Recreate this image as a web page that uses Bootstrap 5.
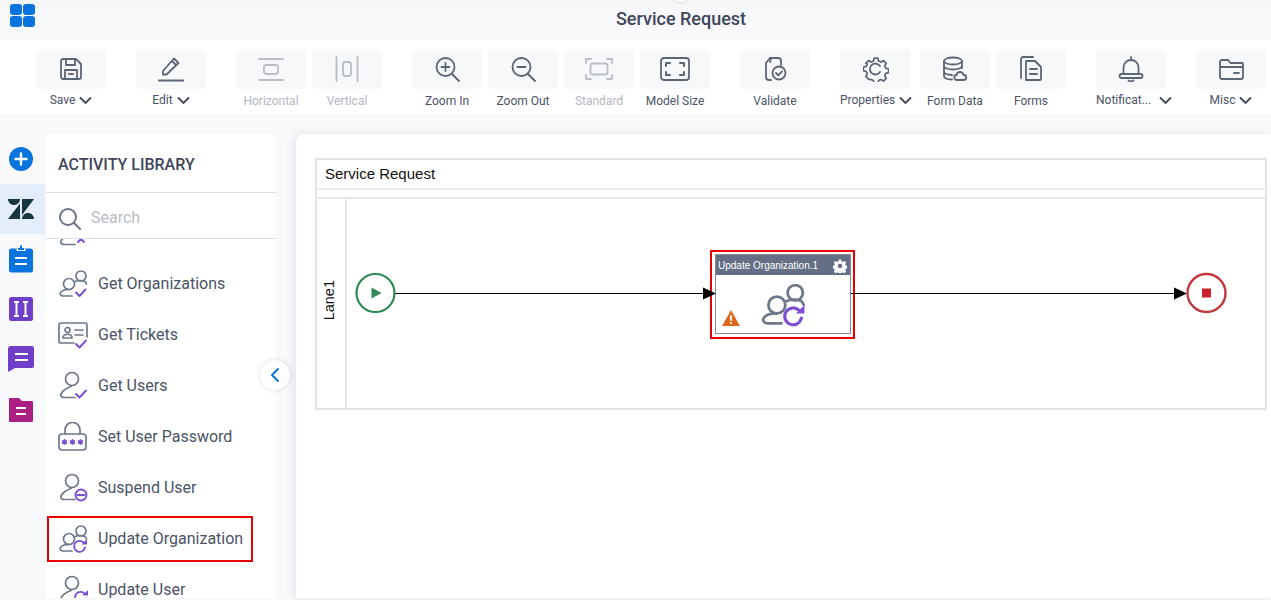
<!DOCTYPE html>
<html lang="en">

<head>
  <meta charset="UTF-8">
  <title>Service Request</title>
  <link href="https://cdn.jsdelivr.net/npm/bootstrap@5.3.0/dist/css/bootstrap.min.css" rel="stylesheet">
  <style>
    body { background: #f8f9fb; font-family: Roboto, sans-serif; color: #434a5e; height: 600px; overflow: hidden; }
    .top-head { height: 39px; background: linear-gradient(#f4f5f7, #f8f9fb 30%); }
    .top-logo { left: 10px; top: 4px; width: 25px; display: grid; grid-template-columns: 12px 12px; gap: 1px; }
    .top-logo i { height: 11px; background: #0a74de; border-radius: 3px; display: block; }
    .top-knob { left: 674px; top: -6px; width: 13px; height: 8px; background: #fff; border-radius: 50%; box-shadow: 0 0 3px rgba(80, 90, 110, .25); }
    .top-title { font-size: 18px; font-weight: 500; color: #3f4659; margin-left: 91px; line-height: 37px; }
    .tool-strip { height: 75px; background: #fff; padding: 10px 0 0 36px; }
    .tool-item { width: 70px; margin-right: 6px; flex: none; }
    .tool-item.grp-end { margin-right: 30px; }
    .tool-item.wide-item { width: 71px; margin-right: 9px; }
    .tool-item:last-child { margin-right: 0; }
    .tool-box { height: 40px; background: #f7f8fa; border-radius: 5px; }
    .tool-box svg { width: 26px; height: 26px; fill: none; stroke: #5c6575; stroke-width: 1.8; stroke-linecap: round; stroke-linejoin: round; }
    .tool-box svg.art-28 { width: 28px; }
    .tool-box svg.art-30 { width: 30px; }
    .tool-label { font-size: 12px; line-height: 14px; margin-top: 5px; white-space: nowrap; color: #4b5366; }
    .tool-label.has-menu { margin-top: 4px; }
    .tool-label svg { width: 13px; height: 9px; margin-left: 4px; fill: none; stroke: #3f4659; stroke-width: 1.8; }
    .is-off .tool-box svg { stroke: #b9bdc6; }
    .is-off .tool-label { color: #b4b8c1; }
    .work-row { height: 484px; padding-top: 20px; }
    .side-rail { width: 46px; flex: none; }
    .rail-slot { height: 50px; width: 45px; padding-right: 3px; }
    .rail-slot.on-slot { background: #e3eefa; }
    .rail-slot svg { width: 28px; height: 28px; }
    .lib-panel { width: 230px; flex: none; background: #fff; }
    .lib-head { height: 59px; padding: 3px 0 0 12px; font-size: 16px; font-weight: 500; color: #3f4659; border-bottom: 1px solid #dcdde6; }
    .lib-search { height: 46px; padding: 5px 0 0 12px; border-bottom: 1px solid #dcdde6; background: #fff; position: relative; z-index: 1; font-size: 16px; color: #b9bcc5; }
    .lib-search svg { width: 23px; height: 23px; margin-right: 10px; fill: none; stroke: #6c7585; stroke-width: 2; stroke-linecap: round; }
    .lib-list { margin-top: -32px; }
    .lib-item { height: 51px; padding-left: 12px; font-size: 16px; color: #4b5366; }
    .lib-item svg { width: 30px; height: 30px; margin-right: 10px; flex: none; fill: none; stroke: #6f7889; stroke-width: 1.7; stroke-linecap: round; stroke-linejoin: round; }
    .lib-item svg .acc { stroke: #7a4fd6; stroke-width: 1.9; }
    .lib-item svg .acc-fill { fill: #7a4fd6; stroke: none; }
    .pick-box { left: 1px; top: 3px; width: 206px; height: 46px; border: 2px solid #e90000; }
    .fold-btn { left: 260px; top: 246px; width: 30px; height: 30px; background: #fff; box-shadow: 0 0 5px rgba(60, 70, 90, .2); z-index: 2; }
    .fold-btn svg { width: 12px; height: 16px; fill: none; stroke: #0a74de; stroke-width: 2; stroke-linecap: round; stroke-linejoin: round; }
    .canvas-card { margin-left: 20px; background: #fff; padding: 24px 4px 0 19px; border-top-left-radius: 8px; box-shadow: -2px 0 8px rgba(80, 90, 110, .14); }
    .pool-box { height: 252px; border: 2px solid #e3e3e3; font-family: "Liberation Sans", Arial, sans-serif; font-size: 15px; color: #111; }
    .pool-title { height: 30px; padding-left: 8px; line-height: 27px; border-bottom: 2px solid #ececec; }
    .pool-gap { height: 9px; border-bottom: 2px solid #e6e6e6; }
    .lane-row { height: 209px; }
    .lane-tag { width: 30px; border-right: 2px solid #e6e6e6; }
    .lane-tag span { writing-mode: vertical-rl; transform: rotate(180deg); font-size: 14.5px; margin-bottom: 6px; margin-right: 2px; }
    .flow-lines { left: 0; top: 0; width: 950px; height: 209px; }
    .task-pick { left: 393px; top: 51px; width: 145px; height: 89px; border: 2px solid #e90000; background: #fff; padding: 2px 2px 0 3px; }
    .task-box { height: 80px; border: 1px solid #8c8c8c; }
    .task-top { height: 20px; background: #646f85; color: #fff; font-size: 10px; padding: 1px 3px 0 2px; white-space: nowrap; }
    .task-top svg { width: 14px; height: 14px; }
    .task-warn { left: 6px; bottom: 7px; width: 18px; height: 16px; }
    .task-art { left: 44px; top: 27px; width: 46px; height: 46px; fill: none; stroke: #6f7889; stroke-width: 1.8; stroke-linecap: round; stroke-linejoin: round; }
    .task-art .acc { stroke: #7a4fd6; stroke-width: 2; }
    .task-art .acc-fill { fill: #7a4fd6; stroke: none; }
  </style>
</head>

<body>
  <svg width="0" height="0" class="position-absolute">
    <symbol id="twoPeople" viewBox="0 0 30 30">
      <circle cx="11" cy="15" r="5.500"/>
      <circle cx="23" cy="7" r="5"/>
      <path d="M14 27H5c-2.500 0-3.500-2-2.500-3.500C4 21 7 20.500 11 20.500"/>
      <path d="M17 12.500c1.500-.7 3.500-1 6-1 3 0 5 1.500 5.500 3.500"/>
    </symbol>
    <symbol id="onePerson" viewBox="0 0 30 30">
      <circle cx="14" cy="8" r="6.500"/>
      <path d="M17 26.500H6c-3 0-4-2.500-2.500-4.500 2-3 5.500-5 9.500-6.500"/>
    </symbol>
  </svg>

  <div class="top-head position-relative d-flex justify-content-center">
    <div class="top-logo position-absolute"><i></i><i></i><i></i><i></i></div>
    <span class="top-knob position-absolute"></span>
    <div class="top-title">Service Request</div>
  </div>

  <div class="tool-strip d-flex">
    <div class="tool-item grp-end text-center">
      <div class="tool-box d-flex align-items-center justify-content-center"><svg viewBox="0 0 26 26"><path d="M5 3h13l5 5v13a2 2 0 0 1-2 2H5a2 2 0 0 1-2-2V5a2 2 0 0 1 2-2z"/><path d="M8 3v6h9V3M7 23v-9h12v9M11 18h4"/></svg></div>
      <div class="tool-label has-menu">Save<svg viewBox="0 0 13 9"><path d="M1 1.500l5.500 5.500 5.500-5.500"/></svg></div>
    </div>
    <div class="tool-item grp-end text-center">
      <div class="tool-box d-flex align-items-center justify-content-center"><svg viewBox="0 0 26 26"><path d="M5 18v-3L16 2.500l4.500 4.500L8.500 18.500H5zM14 5l4 4"/><path d="M1 24.500h24" stroke-width="2.200"/></svg></div>
      <div class="tool-label has-menu">Edit<svg viewBox="0 0 13 9"><path d="M1 1.500l5.500 5.500 5.500-5.500"/></svg></div>
    </div>
    <div class="tool-item is-off text-center">
      <div class="tool-box d-flex align-items-center justify-content-center"><svg viewBox="0 0 26 26"><path d="M1 3h24M1 24h24"/><rect x="6" y="9" width="14" height="9" rx="2.500"/></svg></div>
      <div class="tool-label">Horizontal</div>
    </div>
    <div class="tool-item grp-end is-off text-center">
      <div class="tool-box d-flex align-items-center justify-content-center"><svg viewBox="0 0 26 26"><path d="M2.500 1v24M23.500 1v24"/><rect x="9" y="6" width="8" height="14" rx="2.500"/></svg></div>
      <div class="tool-label">Vertical</div>
    </div>
    <div class="tool-item text-center">
      <div class="tool-box d-flex align-items-center justify-content-center"><svg class="art-28" viewBox="0 0 26 26"><circle cx="11.500" cy="11" r="9"/><path d="M18 18l7 7M11.500 7v8M7.500 11h8"/></svg></div>
      <div class="tool-label">Zoom In</div>
    </div>
    <div class="tool-item text-center">
      <div class="tool-box d-flex align-items-center justify-content-center"><svg class="art-28" viewBox="0 0 26 26"><circle cx="11.500" cy="11" r="9"/><path d="M18 18l7 7M7.500 11h8"/></svg></div>
      <div class="tool-label">Zoom Out</div>
    </div>
    <div class="tool-item is-off text-center">
      <div class="tool-box d-flex align-items-center justify-content-center"><svg class="art-28" viewBox="0 0 28 26"><path d="M1 7V3h5M22 3h5v4M27 19v4h-5M6 23H1v-4"/><rect x="5.500" y="7.500" width="17" height="11" rx="2.500"/></svg></div>
      <div class="tool-label">Standard</div>
    </div>
    <div class="tool-item grp-end text-center">
      <div class="tool-box d-flex align-items-center justify-content-center"><svg class="art-30" viewBox="0 0 30 26"><rect x="1" y="2" width="28" height="22" rx="3"/><path d="M6 10V7h4M20 7h4v3M24 16v3h-4M10 19H6v-3" stroke-width="2"/></svg></div>
      <div class="tool-label">Model Size</div>
    </div>
    <div class="tool-item grp-end text-center">
      <div class="tool-box d-flex align-items-center justify-content-center"><svg viewBox="0 0 26 26"><path d="M9 24H7a3 3 0 0 1-3-3V7l4-5h8a3 3 0 0 1 3 3v4"/><path d="M8 2c1 1 .5 3 0 4"/><circle cx="17" cy="17" r="6.500"/><path d="M14 17l2.300 2.300 3.800-4"/></svg></div>
      <div class="tool-label">Validate</div>
    </div>
    <div class="tool-item wide-item text-center">
      <div class="tool-box d-flex align-items-center justify-content-center"><svg viewBox="0 0 26 26"><path d="M11 1.500h4l.7 3 2.600 1.100 2.700-1.600 2.900 2.900-1.600 2.700 1.100 2.600 3 .7v4l-3 .7-1.100 2.600 1.600 2.700-2.900 2.900-2.700-1.600-2.600 1.100-.7 3h-4l-.7-3-2.600-1.100L5 23.800l-2.900-2.900 1.600-2.700-1.100-2.600-3-.7v-4l3-.7 1.100-2.600L2.100 6.900 5 4l2.700 1.600 2.600-1.100z" transform="translate(.8 .8) scale(.94)"/><path d="M17 10a5.500 5.500 0 1 0 0 6"/></svg></div>
      <div class="tool-label has-menu">Properties<svg viewBox="0 0 13 9"><path d="M1 1.500l5.500 5.500 5.500-5.500"/></svg></div>
    </div>
    <div class="tool-item text-center">
      <div class="tool-box d-flex align-items-center justify-content-center"><svg viewBox="0 0 26 26"><ellipse cx="11" cy="5" rx="9" ry="3.500"/><path d="M2 5v15c0 2 3 3.500 8 3.500M20 5v7M2 10c0 2 4 3.500 9 3.500s9-1.500 9-3.500M2 15.500c0 2 3 3.300 8 3.500"/><path d="M15 24a2.500 2.500 0 0 1-.5-5c.5-2 2-3 3.500-3s3 1 3.500 3a2.500 2.500 0 0 1 .5 5z"/></svg></div>
      <div class="tool-label">Form Data</div>
    </div>
    <div class="tool-item grp-end text-center">
      <div class="tool-box d-flex align-items-center justify-content-center"><svg viewBox="0 0 26 26"><path d="M3 22V3a2 2 0 0 1 2-2h10"/><path d="M8 5h9l6 6v12a1 1 0 0 1-1 1H8z"/><path d="M12 13h7M12 18h7"/></svg></div>
      <div class="tool-label">Forms</div>
    </div>
    <div class="tool-item grp-end text-center">
      <div class="tool-box d-flex align-items-center justify-content-center"><svg viewBox="0 0 26 26"><path d="M13 1v3M5.500 18v-6.500a7.500 7.500 0 0 1 15 0V18"/><rect x="1.500" y="18" width="23" height="4" rx="2"/><path d="M10.500 24.500c1.500 1 3.500 1 5 0"/></svg></div>
      <div class="tool-label has-menu">Notificat...<svg class="ms-2" viewBox="0 0 13 9"><path d="M1 1.500l5.500 5.500 5.500-5.500"/></svg></div>
    </div>
    <div class="tool-item text-center">
      <div class="tool-box d-flex align-items-center justify-content-center"><svg viewBox="0 0 26 26"><path d="M2 21V6a2 2 0 0 1 2-2h6l2.500 3H24a1 1 0 0 1 1 1v13a2 2 0 0 1-2 2H4a2 2 0 0 1-2-2zM2 11h23M16 17h5"/></svg></div>
      <div class="tool-label has-menu">Misc<svg viewBox="0 0 13 9"><path d="M1 1.500l5.500 5.500 5.500-5.500"/></svg></div>
    </div>
  </div>

  <div class="work-row d-flex position-relative">
    <div class="side-rail">
      <div class="rail-slot d-flex align-items-center justify-content-center">
        <svg viewBox="0 0 28 28"><circle cx="14" cy="14" r="12" fill="#0a74de"/><path d="M14 8.500v11M8.500 14h11" stroke="#fff" stroke-width="2.400" stroke-linecap="round"/></svg>
      </div>
      <div class="rail-slot on-slot d-flex align-items-center justify-content-center">
        <svg viewBox="0 0 28 28"><path fill="#17363d" d="M1 4h12c0 3.300-2.700 6-6 6S1 7.300 1 4zM15 4h12L15 20zM13 8.500V24H1zM15 24c0-3.300 2.700-6 6-6s6 2.700 6 6z"/></svg>
      </div>
      <div class="rail-slot d-flex align-items-center justify-content-center">
        <svg viewBox="0 0 28 28"><rect x="2" y="3.500" width="24" height="24" rx="2.500" fill="#0a74de"/><path d="M9.500 3.500h9V6h-9z" fill="#fff"/><path d="M11 3h6v2h-6zM13 .5h2v3h-2z" fill="#0a74de"/><path d="M8 13h12M8 19h12" stroke="#fff" stroke-width="2.200"/></svg>
      </div>
      <div class="rail-slot d-flex align-items-center justify-content-center">
        <svg viewBox="0 0 28 28"><rect x="2" y="2" width="24" height="24" rx="2.500" fill="#6f3fc9"/><path d="M7 7h5M9.500 7v14M7 21h5M16 7h5M18.500 7v14M16 21h5" stroke="#fff" stroke-width="2"/></svg>
      </div>
      <div class="rail-slot d-flex align-items-center justify-content-center">
        <svg viewBox="0 0 28 28"><path d="M4 1h21a2 2 0 0 1 2 2v18a2 2 0 0 1-2 2H8l-7 4V4a3 3 0 0 1 3-3z" fill="#6f3fc9"/><path d="M8 9h13M8 15h13" stroke="#fff" stroke-width="2.200"/></svg>
      </div>
      <div class="rail-slot d-flex align-items-center justify-content-center">
        <svg viewBox="0 0 28 28"><path d="M2 4a1 1 0 0 1 1-1h9l3 3h10a1 1 0 0 1 1 1v19a1 1 0 0 1-1 1H3a1 1 0 0 1-1-1z" fill="#ab1f83"/><path d="M9 13h10M9 19h10" stroke="#fff" stroke-width="2.200"/></svg>
      </div>
    </div>

    <div class="lib-panel overflow-hidden">
      <div class="lib-head d-flex align-items-center">ACTIVITY LIBRARY</div>
      <div class="lib-search d-flex align-items-center">
        <svg viewBox="0 0 23 23"><circle cx="10" cy="10" r="8"/><path d="M16 16l6 6"/></svg>
        <span>Search</span>
      </div>
      <div class="lib-list">
        <div class="lib-item d-flex align-items-center">
          <svg viewBox="0 0 30 30"><use href="#onePerson"/><path class="acc" d="M20 24l3-3 3 3"/></svg>
        </div>
        <div class="lib-item d-flex align-items-center">
          <svg viewBox="0 0 30 30"><use href="#twoPeople"/><path class="acc" d="M18 23.500l3.500 3.500 6-6.500"/></svg>
          <span>Get Organizations</span>
        </div>
        <div class="lib-item d-flex align-items-center">
          <svg viewBox="0 0 30 30"><path d="M16 23H3a2 2 0 0 1-2-2V5a2 2 0 0 1 2-2h24a2 2 0 0 1 2 2v12"/><circle cx="9.500" cy="10" r="2.500"/><path d="M5 18c0-5 9-5 9 0zM17 10h8M17 15h8"/><path class="acc" d="M18 24l3.500 3.500 6.500-7"/></svg>
          <span>Get Tickets</span>
        </div>
        <div class="lib-item d-flex align-items-center">
          <svg viewBox="0 0 30 30"><use href="#onePerson"/><path class="acc" d="M18 23l3.500 3.500 6.500-7"/></svg>
          <span>Get Users</span>
        </div>
        <div class="lib-item d-flex align-items-center">
          <svg viewBox="0 0 30 30"><rect x="1" y="12" width="27" height="16" rx="3"/><path d="M7 12V8a7.500 7.500 0 0 1 15 0v4"/><path class="acc" d="M6.500 18v4M4.700 19l3.600 2M8.300 19l-3.600 2M14.500 18v4M12.700 19l3.600 2M16.300 19l-3.600 2M22.500 18v4M20.700 19l3.600 2M24.300 19l-3.600 2" stroke-width="1.200"/></svg>
          <span>Set User Password</span>
        </div>
        <div class="lib-item d-flex align-items-center">
          <svg viewBox="0 0 30 30"><use href="#onePerson"/><circle class="acc" cx="23" cy="22" r="5.500"/><path class="acc" d="M19.500 22h7"/></svg>
          <span>Suspend User</span>
        </div>
        <div class="lib-item position-relative d-flex align-items-center">
          <span class="pick-box position-absolute"></span>
          <svg viewBox="0 0 30 30"><use href="#twoPeople"/><path class="acc" d="M27 23.500a5.500 5.500 0 1 1-1.500-5"/><path class="acc-fill" d="M23.500 20.500h5.500v-5.500z"/></svg>
          <span>Update Organization</span>
        </div>
        <div class="lib-item d-flex align-items-center">
          <svg viewBox="0 0 30 30"><use href="#onePerson"/><path class="acc" d="M28 23.500a5.500 5.500 0 1 1-1.500-5"/><path class="acc-fill" d="M24.500 20.500h5.500v-5.500z"/></svg>
          <span>Update User</span>
        </div>
      </div>
    </div>

    <div class="fold-btn position-absolute rounded-circle d-flex align-items-center justify-content-center">
      <svg viewBox="0 0 12 16"><path d="M9 2L3 8l6 6"/></svg>
    </div>

    <div class="canvas-card flex-grow-1">
      <div class="pool-box">
        <div class="pool-title">Service Request</div>
        <div class="pool-gap"></div>
        <div class="lane-row d-flex position-relative">
          <div class="lane-tag d-flex align-items-center justify-content-center flex-shrink-0"><span>Lane1</span></div>

          <!-- nodes sit on the lane as a free canvas -->
          <div class="task-pick position-absolute">
            <div class="task-box position-relative">
              <div class="task-top d-flex align-items-center justify-content-between">
                <span>Update Organization.1</span>
                <svg viewBox="0 0 24 24"><path fill="#fff" fill-rule="evenodd" d="M10 1h4l.6 3 2.500 1 2.600-1.700 2.900 2.900-1.700 2.600 1 2.500 3 .6v4l-3 .6-1 2.500 1.700 2.600-2.900 2.900-2.600-1.700-2.500 1-.6 3h-4l-.6-3-2.500-1-2.600 1.700-2.900-2.900 1.700-2.600-1-2.500-3-.6v-4l3-.6 1-2.500L1.400 6.200l2.900-2.900 2.600 1.700 2.500-1zM12 8a4 4 0 1 0 0 8 4 4 0 0 0 0-8z"/></svg>
              </div>
              <svg class="task-warn position-absolute" viewBox="0 0 19 17"><path d="M9.500 0L19 17H0z" fill="#e0681c"/><path d="M9.500 5.500v6M9.500 13v2" stroke="#fff" stroke-width="2"/></svg>
              <svg class="task-art position-absolute" viewBox="0 0 30 30"><use href="#twoPeople"/><path class="acc" d="M27 23.500a5.500 5.500 0 1 1-1.500-5"/><path class="acc-fill" d="M23.500 20.500h5.500v-5.500z"/></svg>
            </div>
          </div>
          <svg class="flow-lines position-absolute" viewBox="0 0 950 209">
            <line x1="78" y1="94.500" x2="390" y2="94.500" stroke="#000" stroke-width="1"/>
            <path d="M386 88.500l13 6-13 6z" fill="#000"/>
            <line x1="534" y1="94.500" x2="860" y2="94.500" stroke="#000" stroke-width="1"/>
            <path d="M857 88.500l13 6-13 6z" fill="#000"/>
            <circle cx="58.500" cy="94" r="19" fill="#fff" stroke="#2e8b57" stroke-width="2.200"/>
            <path d="M54.500 88.500l10 5.500-10 5.500z" fill="#2e8b57"/>
            <circle cx="889.500" cy="94" r="19" fill="#fff" stroke="#c0393f" stroke-width="2.400"/>
            <rect x="885" y="89.500" width="9" height="9" fill="#c8202a"/>
          </svg>
        </div>
      </div>
    </div>
  </div>

  <script src="https://cdn.jsdelivr.net/npm/bootstrap@5.3.0/dist/js/bootstrap.bundle.min.js"></script>
</body>

</html>
